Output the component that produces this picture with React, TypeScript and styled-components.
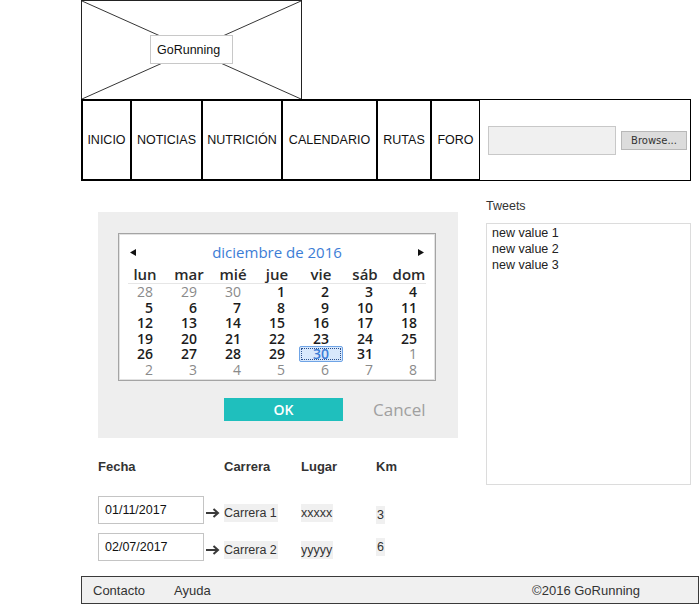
import React from "react";
import styled, { createGlobalStyle } from "styled-components";

type Day = { n: number; muted?: boolean; selected?: boolean };

const navItems = [
  { label: "INICIO", width: 49 },
  { label: "NOTICIAS", width: 71 },
  { label: "NUTRICIÓN", width: 80 },
  { label: "CALENDARIO", width: 95 },
  { label: "RUTAS", width: 54 },
  { label: "FORO", width: 49 },
];

const weekDays = ["lun", "mar", "mié", "jue", "vie", "sáb", "dom"];

const weeks: Day[][] = [
  [{ n: 28, muted: true }, { n: 29, muted: true }, { n: 30, muted: true }, { n: 1 }, { n: 2 }, { n: 3 }, { n: 4 }],
  [5, 6, 7, 8, 9, 10, 11].map((n) => ({ n })),
  [12, 13, 14, 15, 16, 17, 18].map((n) => ({ n })),
  [19, 20, 21, 22, 23, 24, 25].map((n) => ({ n })),
  [{ n: 26 }, { n: 27 }, { n: 28 }, { n: 29 }, { n: 30, selected: true }, { n: 31 }, { n: 1, muted: true }],
  [2, 3, 4, 5, 6, 7, 8].map((n) => ({ n, muted: true })),
];

const races = [
  { date: "01/11/2017", name: "Carrera 1", place: "xxxxx", km: "3", kmShift: 2 },
  { date: "02/07/2017", name: "Carrera 2", place: "yyyyy", km: "6", kmShift: -3 },
];

export default function App() {
  return (
    <>
      <GlobalStyle />
      <Page>
        <Logo>
          <Cross viewBox="0 0 220 99" preserveAspectRatio="none">
            <line x1="0" y1="0" x2="220" y2="99" stroke="#333" strokeWidth="1" />
            <line x1="220" y1="0" x2="0" y2="99" stroke="#333" strokeWidth="1" />
          </Cross>
          <LogoLabel>GoRunning</LogoLabel>
        </Logo>

        <Nav>
          {navItems.map((item) => (
            <NavItem key={item.label} $width={item.width}>
              {item.label}
            </NavItem>
          ))}
          <Search>
            <SearchInput />
            <BrowseButton>Browse...</BrowseButton>
          </Search>
        </Nav>

        <Main>
          <LeftColumn>
            <DialogPanel>
              <Calendar>
                <MonthBar>
                  <Arrow viewBox="0 0 6 7">
                    <polygon points="6,0 6,7 0,3.5" fill="#111" />
                  </Arrow>
                  <MonthTitle>diciembre de 2016</MonthTitle>
                  <Arrow viewBox="0 0 6 7">
                    <polygon points="0,0 0,7 6,3.5" fill="#111" />
                  </Arrow>
                </MonthBar>
                <DayGrid>
                  {weekDays.map((d) => (
                    <DayHead key={d}>{d}</DayHead>
                  ))}
                </DayGrid>
                <Divider />
                <DayGrid>
                  {weeks.flat().map((d, i) => (
                    <DayCell key={i} $muted={d.muted} $selected={d.selected}>
                      {d.n}
                    </DayCell>
                  ))}
                </DayGrid>
              </Calendar>
              <ButtonRow>
                <OkButton>OK</OkButton>
                <CancelButton>Cancel</CancelButton>
              </ButtonRow>
            </DialogPanel>

            <TableHead>
              <HeadCell>Fecha</HeadCell>
              <HeadCell>Carrera</HeadCell>
              <HeadCell>Lugar</HeadCell>
              <HeadCell>Km</HeadCell>
            </TableHead>
            <TableBody>
              {races.map((r) => (
                <RaceRow key={r.date}>
                  <DateCell>
                    <DateBox>{r.date}</DateBox>
                    <RowArrow viewBox="0 0 14 10">
                      <line x1="0" y1="5" x2="12" y2="5" stroke="#3a3a3a" strokeWidth="2" />
                      <polyline points="7.5,1 12,5 7.5,9" fill="none" stroke="#3a3a3a" strokeWidth="2" />
                    </RowArrow>
                  </DateCell>
                  <ValueCell>
                    <Chip>{r.name}</Chip>
                  </ValueCell>
                  <ValueCell>
                    <Chip>{r.place}</Chip>
                  </ValueCell>
                  <ValueCell>
                    <KmChip $shift={r.kmShift}>{r.km}</KmChip>
                  </ValueCell>
                </RaceRow>
              ))}
            </TableBody>
          </LeftColumn>

          <RightColumn>
            <TweetsTitle>Tweets</TweetsTitle>
            <TweetsBox>
              <div>new value 1</div>
              <div>new value 2</div>
              <div>new value 3</div>
            </TweetsBox>
          </RightColumn>
        </Main>

        <Footer>
          <FooterLink>Contacto</FooterLink>
          <FooterLink>Ayuda</FooterLink>
          <Copyright>©2016 GoRunning</Copyright>
        </Footer>
      </Page>
    </>
  );
}

const GlobalStyle = createGlobalStyle`
  * { box-sizing: border-box; }
  body {
    margin: 0;
    background: #ffffff;
    font-family: Arial, "Liberation Sans", sans-serif;
    font-size: 12.5px;
    color: #222;
  }
`;

const Page = styled.div`
  width: 699px;
  padding-left: 81px;
`;

const Logo = styled.div`
  position: relative;
  width: 221px;
  height: 99px;
  border: 1px solid #222;
  border-bottom: none;
  display: flex;
  align-items: center;
  justify-content: center;
`;

const Cross = styled.svg`
  position: absolute;
  inset: 0;
  width: 100%;
  height: 100%;
`;

const LogoLabel = styled.div`
  position: relative;
  width: 83px;
  height: 29px;
  margin-top: -1px;
  background: #fff;
  border: 1px solid #c8c8c8;
  display: flex;
  align-items: center;
  padding-left: 6px;
  color: #111;
`;

const Nav = styled.div`
  width: 610px;
  height: 82px;
  border: 1px solid #000;
  display: flex;
`;

const NavItem = styled.div<{ $width: number }>`
  width: ${(p) => p.$width}px;
  border: 1px solid #000;
  display: flex;
  align-items: center;
  justify-content: center;
  color: #111;
  white-space: nowrap;
`;

const Search = styled.div`
  flex: 1;
  display: flex;
  align-items: center;
  padding-left: 8px;
  gap: 5px;
`;

const SearchInput = styled.div`
  width: 128px;
  height: 29px;
  background: #f0f0f0;
  border: 1px solid #c8c8c8;
`;

const BrowseButton = styled.div`
  width: 66px;
  height: 19px;
  background: #dcdcdc;
  border: 1px solid #b8b8b8;
  font-family: "DejaVu Sans", sans-serif;
  font-size: 10px;
  color: #333;
  display: flex;
  align-items: center;
  justify-content: center;
`;

const Main = styled.div`
  display: flex;
  align-items: flex-start;
  padding-top: 18px;
`;

const LeftColumn = styled.div`
  width: 360px;
  margin-left: 17px;
  margin-top: 13px;
`;

const DialogPanel = styled.div`
  background: #eeeeee;
  height: 226px;
  padding: 21px 22px 0 20px;
  font-family: "Open Sans", "Noto Sans", sans-serif;
`;

const Calendar = styled.div`
  width: 318px;
  height: 148px;
  background: #fff;
  border: 1px solid #a4a4a4;
  box-shadow: inset 0 0 0 1px #e2e2e2;
  padding: 10px 4px 0;
`;

const MonthBar = styled.div`
  height: 17px;
  display: flex;
  align-items: center;
  justify-content: space-between;
  padding: 0 7px;
`;

const Arrow = styled.svg`
  width: 6px;
  height: 7px;
`;

const MonthTitle = styled.div`
  font-size: 15px;
  color: #3c7dd6;
  line-height: 17px;
`;

const DayGrid = styled.div`
  display: grid;
  grid-template-columns: repeat(7, 44px);
`;

const DayHead = styled.div`
  margin-top: 5px;
  height: 17px;
  line-height: 17px;
  text-align: center;
  font-size: 15px;
  font-weight: 600;
  color: #2a2a2a;
`;

const Divider = styled.div`
  height: 1px;
  margin: 0 5px;
  background: #e6e6e6;
`;

const DayCell = styled.div<{ $muted?: boolean; $selected?: boolean }>`
  height: 15.6px;
  line-height: 13.6px;
  text-align: right;
  padding-right: 13px;
  font-size: 14px;
  font-weight: ${(p) => (p.$muted ? 400 : 600)};
  color: ${(p) => (p.$selected ? "#3c7dd6" : p.$muted ? "#8a8a8a" : "#1c1c1c")};
  background: ${(p) => (p.$selected ? "#d8e8fc" : "transparent")};
  border: 1px solid ${(p) => (p.$selected ? "#6fa4e6" : "transparent")};
  outline: ${(p) => (p.$selected ? "1px dotted #2a4f8c" : "none")};
  outline-offset: -3px;
  border-radius: 2px;
`;

const ButtonRow = styled.div`
  display: flex;
  align-items: center;
  gap: 30px;
  margin-top: 17px;
  padding-left: 106px;
`;

const OkButton = styled.div`
  width: 119px;
  height: 23px;
  background: #1fbfbd;
  color: #fff;
  font-size: 14px;
  font-weight: 600;
  display: flex;
  align-items: center;
  justify-content: center;
`;

const CancelButton = styled.div`
  font-size: 17px;
  color: #a0a0a0;
`;

const TableHead = styled.div`
  display: grid;
  grid-template-columns: 126px 77px 75px auto;
  margin-top: 21px;
`;

const HeadCell = styled.div`
  font-weight: bold;
  font-size: 13px;
  line-height: 16px;
  color: #333;
`;

const TableBody = styled.div`
  display: flex;
  flex-direction: column;
  gap: 9px;
  margin-top: 21px;
`;

const RaceRow = styled.div`
  display: grid;
  grid-template-columns: 126px 77px 75px auto;
  height: 28px;
`;

const DateCell = styled.div`
  display: flex;
  align-items: center;
`;

const DateBox = styled.div`
  width: 106px;
  height: 28px;
  border: 1px solid #c4c4c4;
  padding-left: 6px;
  display: flex;
  align-items: center;
  color: #111;
`;

const RowArrow = styled.svg`
  width: 14px;
  height: 10px;
  margin-left: 2px;
  margin-top: 6px;
`;

const ValueCell = styled.div`
  display: flex;
  align-items: center;
  padding-top: 5px;
`;

const Chip = styled.span`
  background: #f0f0f0;
  color: #333;
  line-height: 18px;
  padding-right: 1px;
`;

const KmChip = styled(Chip)<{ $shift: number }>`
  position: relative;
  top: ${(p) => p.$shift}px;
  padding: 0 1px;
`;

const RightColumn = styled.div`
  width: 205px;
  margin-left: 28px;
`;

const TweetsTitle = styled.div`
  font-size: 12.5px;
  line-height: 14px;
  color: #333;
`;

const TweetsBox = styled.div`
  margin-top: 10px;
  height: 262px;
  border: 1px solid #dcdcdc;
  padding: 1px 5px;
  line-height: 16px;
  color: #222;
`;

const Footer = styled.div`
  width: 618px;
  height: 28px;
  margin-top: 15px;
  border: 1px solid #3a3a3a;
  background: #f0f0f0;
  display: flex;
  align-items: center;
  padding: 0 11px;
  gap: 29px;
  color: #333;
  font-size: 13px;
`;

const FooterLink = styled.span``;

const Copyright = styled.span`
  margin-left: auto;
  margin-right: 47px;
`;
